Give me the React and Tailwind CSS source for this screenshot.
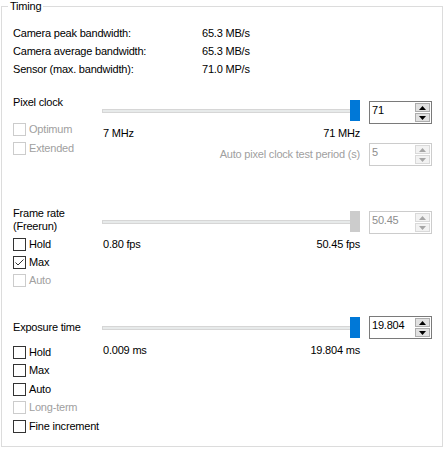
import React from 'react';

const FONT = "font-['Liberation_Sans',Arial,sans-serif]";

// ==============================
// SMALL CONTROLS
// ==============================
function Arrow({ up, disabled }) {
  return (
    <svg width="7" height="4" viewBox="0 0 7 4">
      <polygon
        points={up ? '3.5,0 7,4 0,4' : '0,0 7,0 3.5,4'}
        fill={disabled ? '#a6a6a6' : '#000000'}
      />
    </svg>
  );
}

function Spin({ value, disabled }) {
  const btn = disabled
    ? 'bg-[#f2f2f2] border-[#d9d9d9]'
    : 'bg-[#e1e1e1] border-[#adadad]';

  return (
    <div
      className={`flex h-[23px] w-[63px] border bg-white ${
        disabled ? 'border-[#cccccc] text-[#8d8d8d]' : 'border-[#7a7a7a] text-black'
      }`}
    >
      <div className="flex-1 pl-[2px] pt-[2px] leading-[13px]">{value}</div>
      <div className="mr-[1px] flex w-[15px] flex-col gap-[1px] pt-[1px]">
        <div className={`flex h-[9px] items-center justify-center border ${btn}`}>
          <Arrow up disabled={disabled} />
        </div>
        <div className={`flex h-[9px] items-center justify-center border ${btn}`}>
          <Arrow disabled={disabled} />
        </div>
      </div>
    </div>
  );
}

function Check({ label, checked, disabled, className = '' }) {
  return (
    <div className={`flex h-[13px] items-center ${className}`}>
      <div
        className={`flex h-[13px] w-[13px] items-center justify-center border bg-white ${
          disabled ? 'border-[#cccccc]' : 'border-[#333333]'
        }`}
      >
        {checked && (
          <svg width="11" height="11" viewBox="0 0 11 11">
            <polyline
              points="1.5,5.5 4,8 9.5,2.5"
              fill="none"
              stroke="#333333"
              strokeWidth="1"
            />
          </svg>
        )}
      </div>
      <span
        className={`ml-[3px] leading-[13px] ${
          disabled ? 'text-[#a0a0a0]' : 'text-black'
        }`}
      >
        {label}
      </span>
    </div>
  );
}

function Slider({ disabled }) {
  return (
    <div className="relative flex h-[22px] items-center">
      <div className="h-[4px] w-full border border-[#d6d6d6] bg-[#e7eaea]" />
      <div
        className={`absolute right-0 top-0 h-[21px] w-[10px] ${
          disabled ? 'bg-[#cccccc]' : 'bg-[#0078d7]'
        }`}
      />
    </div>
  );
}

function Range({ min, max }) {
  return (
    <div className="flex justify-between pl-[1px] leading-[13px]">
      <span>{min}</span>
      <span>{max}</span>
    </div>
  );
}

// ==============================
// PAGE
// ==============================
export default function App() {
  const info = [
    ['Camera peak bandwidth:', '65.3 MB/s'],
    ['Camera average bandwidth:', '65.3 MB/s'],
    ['Sensor (max. bandwidth):', '71.0 MP/s'],
  ];

  return (
    <div className={`h-[449px] w-[444px] overflow-hidden bg-white text-[11px] tracking-[-0.2px] text-black ${FONT}`}>
      <fieldset className="ml-[1px] h-[447px] w-[442px] border border-[#dcdcdc] px-0 pb-0 pt-0">
        <legend className="ml-[6px] px-[2px] leading-[13px]">Timing</legend>

        <div className="pl-[11px]">
          {/* INFO */}
          <div className="mt-[11px]">
            {info.map(([k, v]) => (
              <div key={k} className="flex leading-[18px]">
                <span className="w-[189px]">{k}</span>
                <span>{v}</span>
              </div>
            ))}
          </div>

          {/* PIXEL CLOCK */}
          <div className="mt-[18px] flex items-start">
            <div className="w-[89px]">
              <div className="leading-[13px]">Pixel clock</div>
              <Check label="Optimum" disabled className="mt-[14px]" />
              <Check label="Extended" disabled className="mt-[6px]" />
            </div>
            <div className="w-[258px]">
              <div className="mt-[4px]">
                <Slider />
              </div>
              <div className="mt-[5px]">
                <Range min="7 MHz" max="71 MHz" />
              </div>
              <div className="mt-[8px] text-right leading-[13px] text-[#a0a0a0]">
                Auto pixel clock test period (s)
              </div>
            </div>
            <div className="ml-[9px]">
              <div className="mt-[5px]">
                <Spin value="71" />
              </div>
              <div className="mt-[19px]">
                <Spin value="5" disabled />
              </div>
            </div>
          </div>

          {/* FRAME RATE */}
          <div className="mt-[41px] flex items-start">
            <div className="w-[89px]">
              <div className="leading-[13px]">Frame rate</div>
              <div className="leading-[13px]">(Freerun)</div>
              <Check label="Hold" className="mt-[5px]" />
              <Check label="Max" checked className="mt-[5px]" />
              <Check label="Auto" disabled className="mt-[5px]" />
            </div>
            <div className="w-[258px]">
              <div className="mt-[4px]">
                <Slider disabled />
              </div>
              <div className="mt-[5px]">
                <Range min="0.80 fps" max="50.45 fps" />
              </div>
            </div>
            <div className="ml-[9px] mt-[4px]">
              <Spin value="50.45" disabled />
            </div>
          </div>

          {/* EXPOSURE */}
          <div className="mt-[29px] flex items-start">
            <div className="w-[89px]">
              <div className="mt-[5px] leading-[13px]">Exposure time</div>
              <Check label="Hold" className="mt-[12px]" />
              <Check label="Max" className="mt-[5px]" />
              <Check label="Auto" className="mt-[6px]" />
              <Check label="Long-term" disabled className="mt-[5px]" />
              <Check label="Fine increment" className="mt-[6px]" />
            </div>
            <div className="w-[258px]">
              <div className="mt-[1px]">
                <Slider />
              </div>
              <div className="mt-[5px]">
                <Range min="0.009 ms" max="19.804 ms" />
              </div>
            </div>
            <div className="ml-[9px]">
              <Spin value="19.804" />
            </div>
          </div>
        </div>
      </fieldset>
    </div>
  );
}
